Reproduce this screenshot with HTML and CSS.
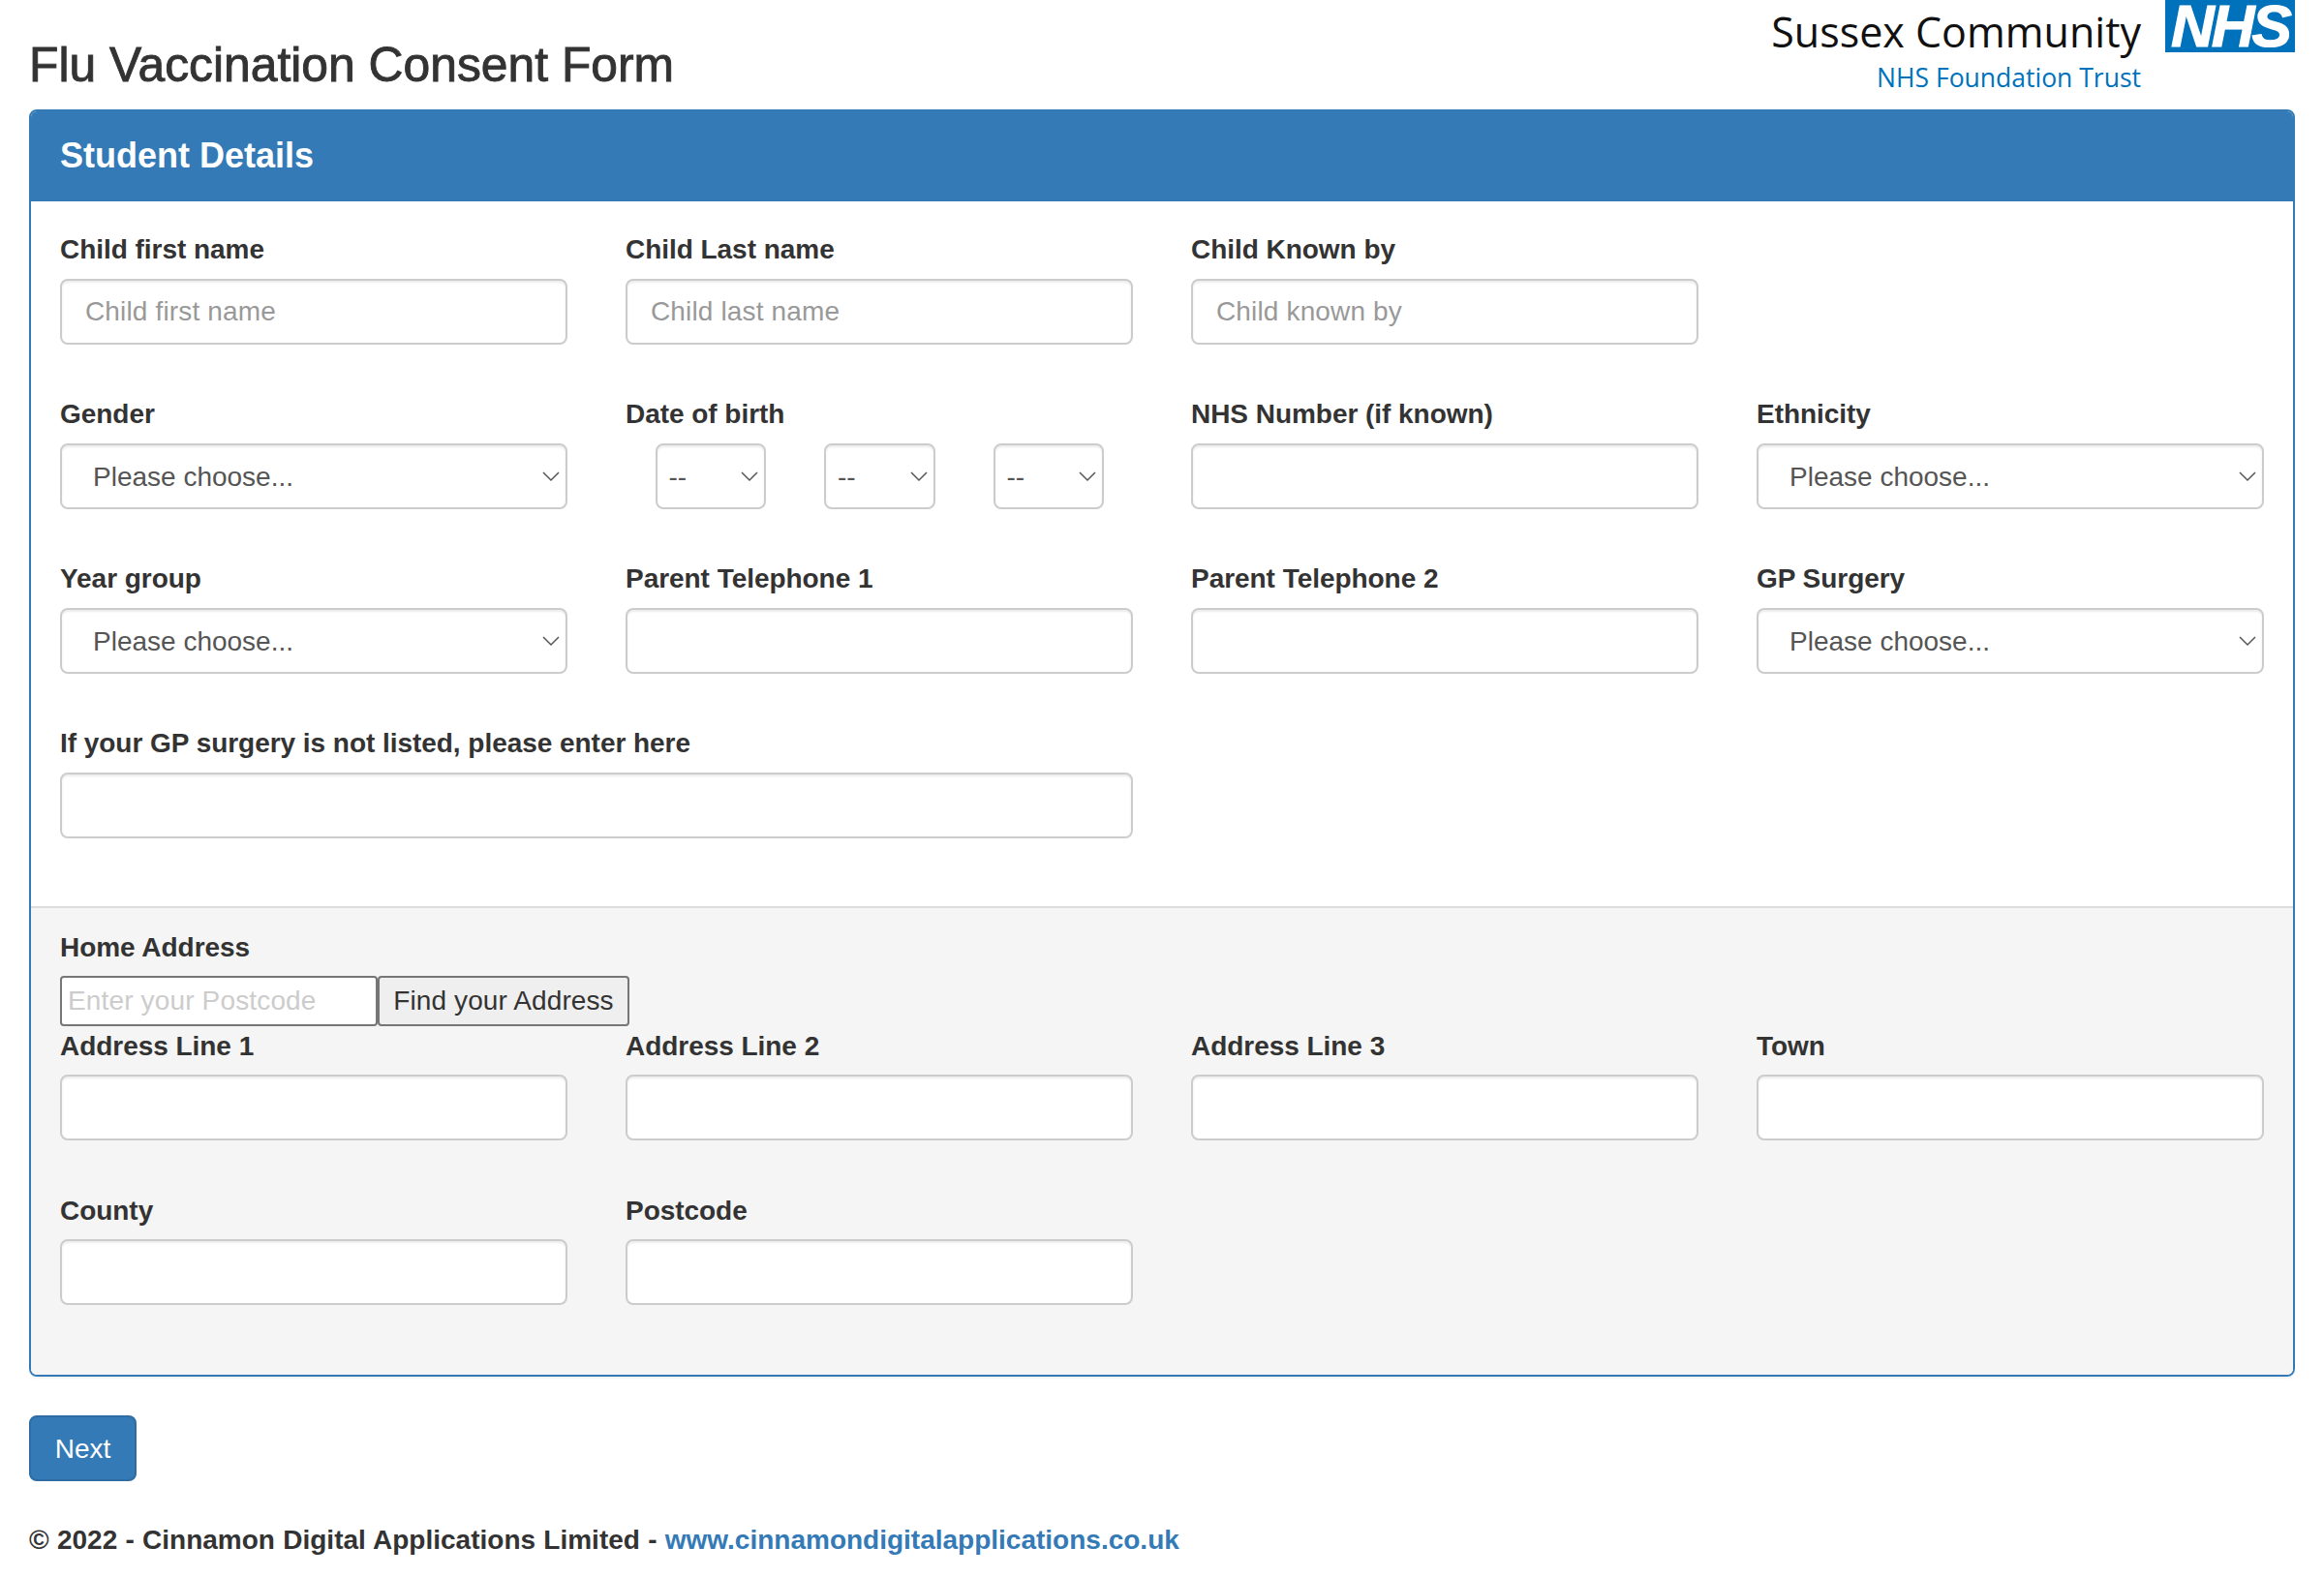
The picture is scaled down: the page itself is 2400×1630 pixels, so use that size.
FILE: index.html
```html
<!DOCTYPE html>
<html lang="en">
<head>
    <meta charset="UTF-8">
    <meta name="viewport" content="width=device-width, initial-scale=1.0">
    <title>Flu Vaccination Consent Form</title>
    <link rel="stylesheet" href="styles.css">
</head>
<body>
    <header class="top-bar">
        <h1 class="page-title">Flu Vaccination Consent Form</h1>
        <div class="logo">
            <div class="logo-name">
                <div class="logo-trust">Sussex Community</div>
                <div class="logo-sub">NHS Foundation Trust</div>
            </div>
            <div class="logo-nhs">NHS</div>
        </div>
    </header>

    <form class="panel">
        <div class="panel-heading">Student Details</div>

        <div class="form-grid section-details">
            <div class="field">
                <label>Child first name</label>
                <input class="form-control" type="text" placeholder="Child first name">
            </div>
            <div class="field">
                <label>Child Last name</label>
                <input class="form-control" type="text" placeholder="Child last name">
            </div>
            <div class="field">
                <label>Child Known by</label>
                <input class="form-control" type="text" placeholder="Child known by">
            </div>
            <div class="field"></div>

            <div class="field">
                <label>Gender</label>
                <select class="form-control select-control"><option>Please choose...</option></select>
            </div>
            <div class="field">
                <label>Date of birth</label>
                <div class="dob">
                    <select class="form-control select-control select-small"><option>--</option></select>
                    <select class="form-control select-control select-small"><option>--</option></select>
                    <select class="form-control select-control select-small"><option>--</option></select>
                </div>
            </div>
            <div class="field">
                <label>NHS Number (if known)</label>
                <input class="form-control" type="text">
            </div>
            <div class="field">
                <label>Ethnicity</label>
                <select class="form-control select-control"><option>Please choose...</option></select>
            </div>

            <div class="field">
                <label>Year group</label>
                <select class="form-control select-control"><option>Please choose...</option></select>
            </div>
            <div class="field">
                <label>Parent Telephone 1</label>
                <input class="form-control" type="text">
            </div>
            <div class="field">
                <label>Parent Telephone 2</label>
                <input class="form-control" type="text">
            </div>
            <div class="field">
                <label>GP Surgery</label>
                <select class="form-control select-control"><option>Please choose...</option></select>
            </div>

            <div class="field field-wide">
                <label>If your GP surgery is not listed, please enter here</label>
                <input class="form-control" type="text">
            </div>
        </div>

        <div class="section-address">
            <div class="lookup">
                <label>Home Address</label>
                <div class="lookup-row">
                    <input class="lookup-input" type="text" placeholder="Enter your Postcode">
                    <button class="lookup-button" type="button">Find your Address</button>
                </div>
            </div>
            <div class="form-grid">
                <div class="field">
                    <label>Address Line 1</label>
                    <input class="form-control" type="text">
                </div>
                <div class="field">
                    <label>Address Line 2</label>
                    <input class="form-control" type="text">
                </div>
                <div class="field">
                    <label>Address Line 3</label>
                    <input class="form-control" type="text">
                </div>
                <div class="field">
                    <label>Town</label>
                    <input class="form-control" type="text">
                </div>
                <div class="field">
                    <label>County</label>
                    <input class="form-control" type="text">
                </div>
                <div class="field">
                    <label>Postcode</label>
                    <input class="form-control" type="text">
                </div>
            </div>
        </div>
    </form>

    <button class="btn-next" type="button">Next</button>

    <footer class="footer">
        © 2022 - Cinnamon Digital Applications Limited - <a href="#">www.cinnamondigitalapplications.co.uk</a>
    </footer>
</body>
</html>
```

FILE: styles.css
```css
* {
    box-sizing: border-box;
}

body {
    font-family: 'Liberation Sans', Arial, sans-serif;
    font-size: 28px;
    line-height: 40px;
    color: #333;
    background-color: #fff;
    margin: 0;
    padding: 0 30px;
}

/* Header */
.top-bar {
    display: flex;
    justify-content: space-between;
    height: 113px;
}

.page-title {
    font-size: 49.8px;
    font-weight: normal;
    -webkit-text-stroke: 0.9px #333;
    line-height: 56px;
    margin: 39px 0 0;
}

.logo {
    display: flex;
    align-items: flex-start;
    gap: 25px;
}

.logo-name {
    font-family: 'Open Sans', sans-serif;
    text-align: right;
}

.logo-trust {
    font-size: 43px;
    line-height: 60px;
    color: #111;
    margin-top: 3px;
}

.logo-sub {
    font-size: 26.5px;
    line-height: 36px;
    color: #0072bc;
    margin-top: -1px;
}

.logo-nhs {
    width: 134px;
    height: 54px;
    background-color: #0072bc;
    color: #fff;
    font-size: 62px;
    line-height: 54px;
    font-weight: bold;
    font-style: italic;
    letter-spacing: -3px;
    -webkit-text-stroke: 1.2px #fff;
    text-align: center;
}

/* Panel */
.panel {
    border: 2px solid #337ab7;
    border-radius: 8px;
    box-shadow: 0 2px 2px rgba(0, 0, 0, 0.05);
    overflow: hidden;
}

.panel-heading {
    background-color: #337ab7;
    color: #fff;
    font-size: 36px;
    font-weight: bold;
    line-height: 94px;
    padding: 0 30px;
    margin-top: -1px;
}

.form-grid {
    display: grid;
    grid-template-columns: repeat(4, 1fr);
}

.section-details {
    padding: 30px 0 18px;
}

.field {
    padding: 0 30px;
    margin-bottom: 52px;
}

.field-wide {
    grid-column: span 2;
}

label {
    display: block;
    font-weight: bold;
    letter-spacing: -0.04px;
    margin-bottom: 10px;
}

.form-control {
    display: block;
    width: 100%;
    height: 68px;
    padding: 0 24px;
    font-family: inherit;
    font-size: 28px;
    color: #555;
    background-color: #fff;
    border: 2px solid #ccc;
    border-radius: 8px;
    box-shadow: inset 0 2px 2px rgba(0, 0, 0, 0.075);
}

.form-control::placeholder {
    color: #999;
    letter-spacing: 0.15px;
}

.select-control {
    appearance: none;
    padding-left: 32px;
    background-image: url("data:image/svg+xml,%3Csvg xmlns='http://www.w3.org/2000/svg' width='18' height='11'%3E%3Cpath d='M1 1l8 8 8-8' fill='none' stroke='%23555' stroke-width='1.5'/%3E%3C/svg%3E");
    background-repeat: no-repeat;
    background-position: right 6px center;
}

.dob {
    display: flex;
    gap: 60px;
    margin-left: 30.5px;
}

.select-small {
    width: 114.5px;
    padding-left: 12px;
}

/* Address */
.section-address {
    background-color: #f5f5f5;
    border-top: 2px solid #ddd;
    padding: 20px 0 20px;
}

.section-address label {
    padding-top: 1px;
    margin-bottom: 9px;
}

.lookup {
    padding: 0 30px;
}

.lookup-row {
    display: flex;
    height: 52px;
}

.lookup-input {
    width: 328px;
    padding: 0 6px;
    font-family: inherit;
    font-size: 28px;
    background-color: #fff;
    border: 2px solid #767676;
    border-radius: 4px;
}

.lookup-input::placeholder {
    color: #ccc;
    letter-spacing: 0.15px;
}

.lookup-button {
    width: 260px;
    padding: 0;
    font-family: inherit;
    font-size: 28px;
    letter-spacing: 0.1px;
    color: #333;
    background-color: #efefef;
    border: 2px solid #767676;
    border-radius: 4px;
}

/* Bottom */
.btn-next {
    display: block;
    width: 111px;
    height: 68px;
    margin-top: 40px;
    padding: 1px 0 0;
    font-family: inherit;
    font-size: 28px;
    color: #fff;
    background-color: #337ab7;
    border: 2px solid #2e6da4;
    border-radius: 8px;
}

.footer {
    font-weight: bold;
    word-spacing: 0.5px;
    margin-top: 41px;
}

.footer a {
    color: #337ab7;
    text-decoration: none;
}
```
